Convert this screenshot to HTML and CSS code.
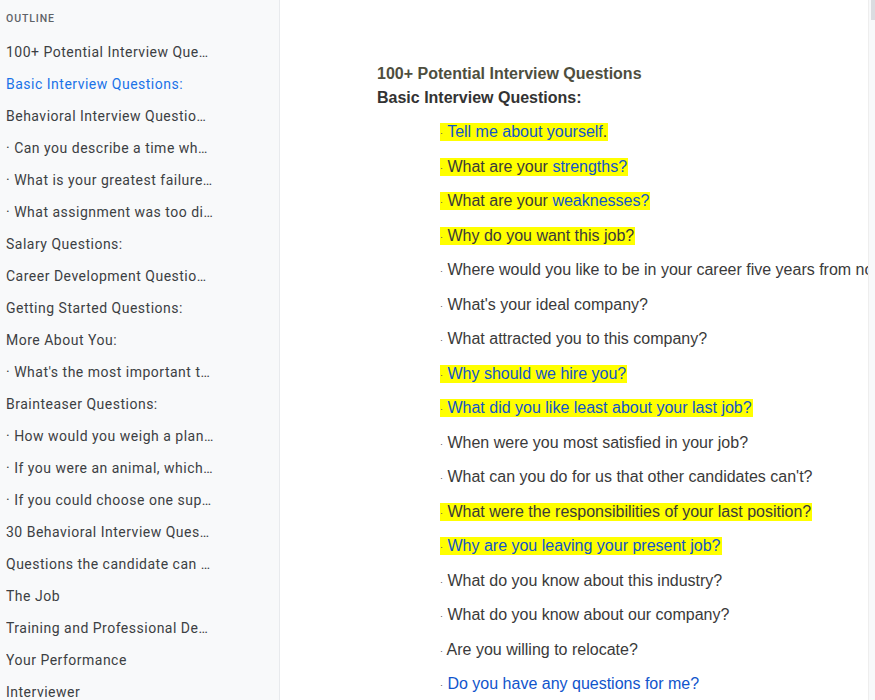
FILE: index.html
```html
<!DOCTYPE html>
<html>
<head>
<meta charset="utf-8">
<link rel="stylesheet" href="styles.css">
</head>
<body>
<div class="app">
  <aside class="outline">
    <div class="outline-title">OUTLINE</div>
    <ul class="outline-list">
      <li>100+ Potential Interview Questions</li>
      <li class="active">Basic Interview Questions:</li>
      <li>Behavioral Interview Questions:</li>
      <li>· Can you describe a time when you had to</li>
      <li>· What is your greatest failure and what</li>
      <li>· What assignment was too difficult for you</li>
      <li>Salary Questions:</li>
      <li>Career Development Questions:</li>
      <li>Getting Started Questions:</li>
      <li>More About You:</li>
      <li>· What's the most important thing you</li>
      <li>Brainteaser Questions:</li>
      <li>· How would you weigh a plane without</li>
      <li>· If you were an animal, which one would</li>
      <li>· If you could choose one superhero power</li>
      <li>30 Behavioral Interview Questions</li>
      <li>Questions the candidate can ask</li>
      <li>The Job</li>
      <li>Training and Professional Development</li>
      <li>Your Performance</li>
      <li>Interviewer</li>
    </ul>
  </aside>
  <main class="doc">
    <div class="page">
      <h1 class="title">100+ Potential Interview Questions</h1>
      <h2 class="subtitle">Basic Interview Questions:</h2>
      <ul class="questions">
        <li><span class="hl"><span class="dot">·</span> <span class="link">Tell me about yourself</span>.</span></li>
        <li><span class="hl"><span class="dot">·</span> What are your <span class="link">strengths?</span></span></li>
        <li><span class="hl"><span class="dot">·</span> What are your <span class="link">weaknesses?</span></span></li>
        <li><span class="hl"><span class="dot">·</span> Why do you want this job?</span></li>
        <li><span class="dot">·</span> Where would you like to be in your career five years from now?</li>
        <li><span class="dot">·</span> What's your ideal company?</li>
        <li><span class="dot">·</span> What attracted you to this company?</li>
        <li><span class="hl"><span class="dot">·</span> <span class="link">Why should we hire you?</span></span></li>
        <li><span class="hl"><span class="dot">·</span> <span class="link">What did you like least about your last job?</span></span></li>
        <li><span class="dot">·</span> When were you most satisfied in your job?</li>
        <li><span class="dot">·</span> What can you do for us that other candidates can't?</li>
        <li><span class="hl"><span class="dot">·</span> What were the responsibilities of your last position?</span></li>
        <li><span class="hl"><span class="dot">·</span> <span class="link">Why are you leaving your present job?</span></span></li>
        <li><span class="dot">·</span> What do you know about this industry?</li>
        <li><span class="dot">·</span> What do you know about our company?</li>
        <li><span class="dot">·</span> Are you willing to relocate?</li>
        <li><span class="dot">·</span> <span class="link">Do you have any questions for me?</span></li>
      </ul>
    </div>
  </main>
  <div class="scrollbar"><div class="thumb"></div></div>
</div>
</body>
</html>
```

FILE: styles.css
```css
html, body {
  margin: 0;
  padding: 0;
  height: 100%;
  overflow: hidden;
  background: #ffffff;
}

.app {
  display: flex;
  height: 700px;
  width: 875px;
}

.outline {
  width: 280px;
  flex: 0 0 280px;
  background: #f8f9fa;
  border-right: 1px solid #e8eaed;
  box-sizing: border-box;
  font-family: Roboto, "Open Sans", sans-serif;
  overflow: hidden;
}

.outline-title {
  font-size: 10.5px;
  letter-spacing: 0.9px;
  color: #5f6368;
  font-weight: 500;
  padding: 13px 0 0 6px;
  height: 23px;
  line-height: 12px;
}

.outline-list {
  list-style: none;
  margin: 0;
  padding: 0 0 0 6px;
}

.outline-list li {
  font-size: 14px;
  line-height: 32px;
  height: 32px;
  letter-spacing: 0.5px;
  color: #3c4043;
  width: 208px;
  white-space: nowrap;
  overflow: hidden;
  text-overflow: ellipsis;
}

.outline-list li.active {
  color: #1a73e8;
}

.doc {
  flex: 1;
  min-width: 0;
  overflow: hidden;
  background: #ffffff;
}

.page {
  padding: 62px 0 0 97px;
  font-family: "Liberation Sans", Arial, sans-serif;
}

.title, .subtitle {
  margin: 0;
  font-size: 16px;
  font-weight: bold;
  line-height: 24px;
  white-space: nowrap;
}

.title {
  color: #4e4e3e;
}

.subtitle {
  color: #333333;
}

.questions {
  list-style: none;
  margin: 0;
  padding: 13px 0 0 63px;
}

.questions li {
  font-size: 16px;
  line-height: 18px;
  height: 34.5px;
  color: #3a3a3a;
  white-space: nowrap;
}

.hl {
  background: #ffff00;
  padding: 0 1px 1px 0;
}

.dot {
  font-size: 9px;
  color: #555555;
  vertical-align: 1px;
}

.link {
  color: #1155cc;
}

.scrollbar {
  flex: 0 0 7px;
  background: #f8f9fa;
  border-left: 1px solid #eeeeee;
  box-sizing: border-box;
}

.thumb {
  height: 20px;
  margin-left: 2px;
  background: #dadce0;
}
```
